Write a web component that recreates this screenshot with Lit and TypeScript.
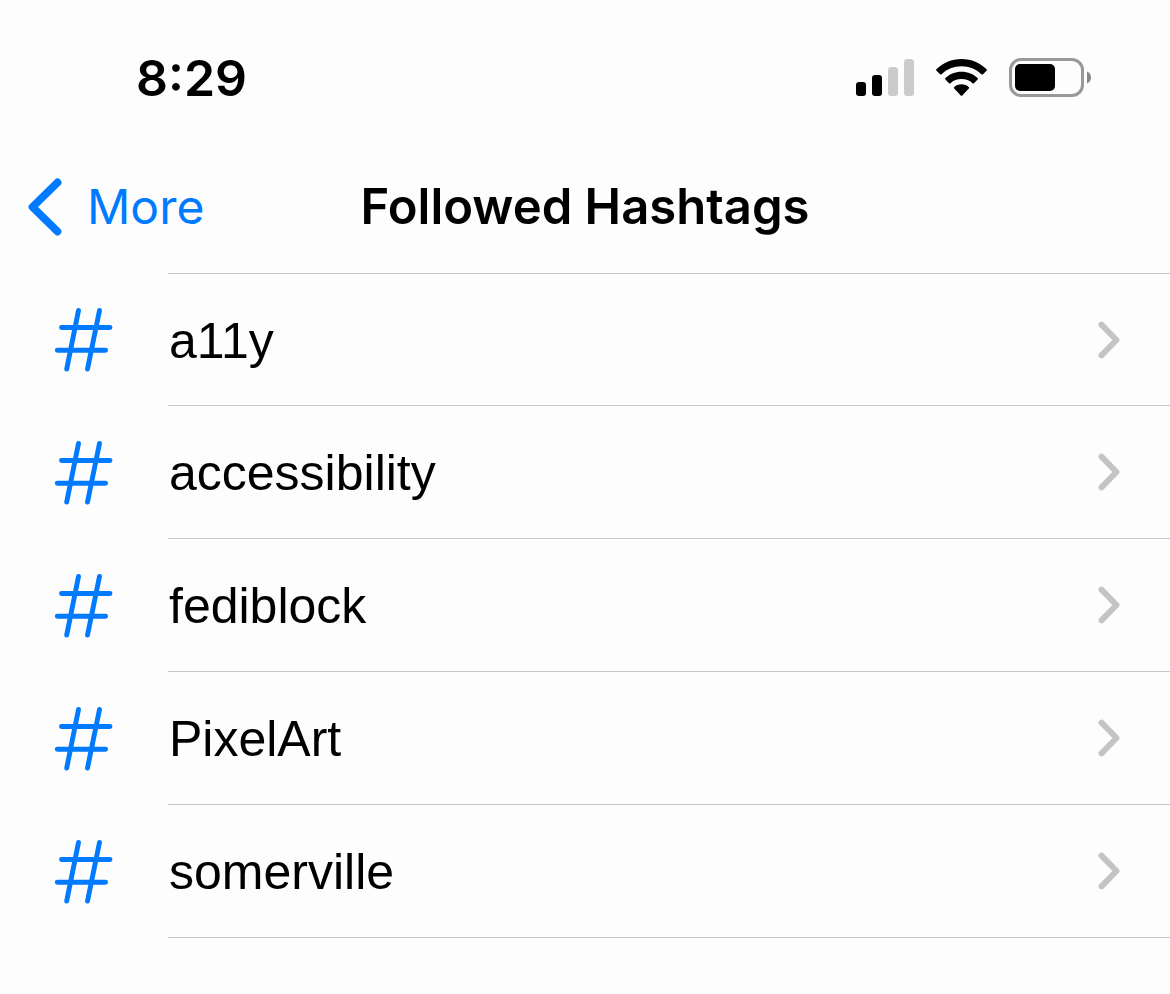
import { LitElement, html, css } from "lit";
import { customElement, property, state } from "lit/decorators.js";

@customElement("status-bar")
class StatusBar extends LitElement {
  @property() time = "";

  static styles = css`
    :host {
      display: flex;
      align-items: center;
      justify-content: space-between;
      height: 156px;
      padding: 0 78px 0 136px;
    }
    .time {
      font-size: 50px;
      font-weight: 600;
      line-height: 60px;
    }
    .icons {
      display: flex;
      align-items: center;
      gap: 22px;
    }
    svg {
      display: block;
    }
  `;

  render() {
    return html`
      <time class="time">${this.time}</time>
      <div class="icons">
        <svg width="58" height="38" viewBox="0 0 58 38" role="img" aria-label="Signal: 2 of 4 bars">
          <rect x="0" y="23" width="10" height="14" rx="3" />
          <rect x="16" y="16" width="10" height="21" rx="3" />
          <rect x="32" y="8" width="10" height="29" rx="3" fill="#cbcbcb" />
          <rect x="48" y="0" width="10" height="37" rx="3" fill="#cbcbcb" />
        </svg>
        <svg width="51" height="38" viewBox="0 0 51 38" role="img" aria-label="Wi-Fi">
          <path d="M25.5 0C35.5 0 44.2 3.9 50.4 10.1C51 10.7 51 11.2 50.5 11.7L47 15.2C46.5 15.7 46 15.7 45.4 15.2C40.2 10.3 33.2 7.300 25.5 7.300S10.800 10.300 5.600 15.200C5 15.700 4.500 15.700 4 15.200L.5 11.700C0 11.200 0 10.700 .6 10.100C6.800 3.900 15.500 0 25.500 0Z" />
          <path d="M25.5 12.8C32 12.8 37.5 15.2 41.6 19.1C42.1 19.6 42.1 20.1 41.6 20.6L38 24.2C37.5 24.7 37 24.7 36.5 24.2C33.6 21.6 29.8 20.1 25.5 20.1S17.4 21.6 14.5 24.2C14 24.7 13.5 24.7 13 24.2L9.4 20.6C8.9 20.1 8.9 19.6 9.4 19.1C13.5 15.2 19 12.8 25.5 12.8Z" />
          <path d="M25.5 25.3C28.4 25.3 30.9 26.3 32.7 27.9C33.3 28.4 33.3 29 32.8 29.5L26.3 36.4C25.8 36.9 25.2 36.9 24.7 36.4L18.2 29.5C17.7 29 17.7 28.4 18.3 27.9C20.1 26.3 22.6 25.3 25.5 25.3Z" />
        </svg>
        <svg width="83" height="40" viewBox="0 0 83 40" role="img" aria-label="Battery: 60%">
          <rect x="1.5" y="1.5" width="72" height="36" rx="10.5" fill="none" stroke="#999" stroke-width="3" />
          <rect x="6" y="6" width="40" height="27" rx="5" />
          <path d="M78 13.5C80.6 14.5 82 16.8 82 19.5S80.6 24.5 78 25.5Z" fill="#888" />
        </svg>
      </div>
    `;
  }
}

@customElement("nav-bar")
class NavBar extends LitElement {
  @property() heading = "";
  @property() back = "";

  static styles = css`
    :host {
      display: grid;
      grid-template-columns: 1fr auto 1fr;
      align-items: center;
      height: 102px;
      padding: 0 27px 15px;
    }
    .back {
      display: inline-flex;
      align-items: center;
      gap: 24px;
      justify-self: start;
      padding: 0;
      border: 0;
      background: none;
      color: #007aff;
      font: inherit;
      font-size: 48px;
      line-height: 60px;
      cursor: pointer;
    }
    svg {
      display: block;
    }
    h1 {
      margin: 0;
      font-size: 49px;
      font-weight: 600;
      line-height: 60px;
    }
  `;

  render() {
    return html`
      <button class="back" type="button">
        <svg width="36" height="58" viewBox="0 0 36 58" aria-hidden="true">
          <path d="M30.500 4.500L5.500 29L30.500 53.500" fill="none" stroke="currentColor" stroke-width="7.800" stroke-linecap="round" stroke-linejoin="round" />
        </svg>
        <span>${this.back}</span>
      </button>
      <h1>${this.heading}</h1>
    `;
  }
}

@customElement("app-root")
class AppRoot extends LitElement {
  @state() private tags = ["a11y", "accessibility", "fediblock", "PixelArt", "somerville"];

  static styles = css`
    :host {
      display: block;
      min-height: 100vh;
      background: #fdfdfd;
      color: #000;
      font-family: Inter, sans-serif;
    }
    .tags {
      margin: 0;
      padding: 0;
      list-style: none;
    }
    .row {
      display: grid;
      grid-template-columns: 168px 1fr;
      box-sizing: border-box;
      height: 133px;
    }
    .link {
      display: grid;
      grid-column: 1 / -1;
      grid-template-columns: subgrid;
      align-items: center;
      color: inherit;
      text-decoration: none;
    }
    .hash {
      display: block;
      margin-left: 54px;
      color: #007aff;
    }
    .body {
      display: flex;
      align-items: center;
      justify-content: space-between;
      box-sizing: border-box;
      height: 133px;
      padding: 0 50px 0 1px;
      border-bottom: 1px solid #c6c6c8;
    }
    .row:first-child .body {
      border-top: 1px solid #c6c6c8;
    }
    .name {
      padding-top: 2px;
      font-family: "Liberation Sans", Arial, sans-serif;
      font-size: 50px;
      line-height: 56px;
    }
    .chevron {
      display: block;
      color: #c4c4c6;
    }
  `;

  render() {
    return html`
      <status-bar time="8:29"></status-bar>
      <nav-bar heading="Followed Hashtags" back="More"></nav-bar>
      <main>
        <ul class="tags">
          ${this.tags.map(
            (tag) => html`
              <li class="row">
                <a class="link" href="#${tag}">
                  <svg class="hash" width="60" height="64" viewBox="0 0 60 64" aria-hidden="true">
                    <path d="M24.5 2.500L12.7 61M45.5 2.500L33.5 61M7.5 19.500H56M3.3 42.300H51.600" fill="none" stroke="currentColor" stroke-width="4.900" stroke-linecap="round" />
                  </svg>
                  <span class="body">
                    <span class="name">${tag}</span>
                    <svg class="chevron" width="22" height="38" viewBox="0 0 22 38" aria-hidden="true">
                      <path d="M3.5 3.700L18.500 19L3.500 34.300" fill="none" stroke="currentColor" stroke-width="6" stroke-linecap="round" stroke-linejoin="round" />
                    </svg>
                  </span>
                </a>
              </li>
            `
          )}
        </ul>
      </main>
    `;
  }
}
